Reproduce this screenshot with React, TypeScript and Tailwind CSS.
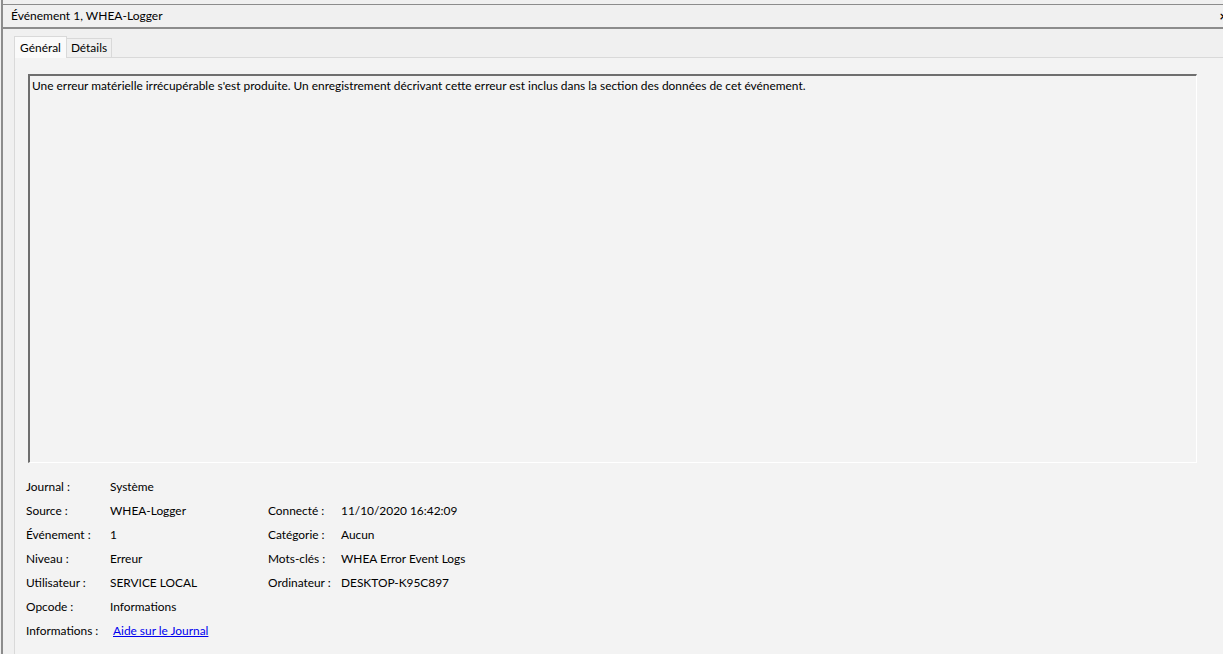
import React from "react";

const rows: [string, React.ReactNode, string, string][] = [
  ["Journal :", "Système", "", ""],
  ["Source :", "WHEA-Logger", "Connecté :", "11/10/2020 16:42:09"],
  ["Événement :", "1", "Catégorie :", "Aucun"],
  ["Niveau :", "Erreur", "Mots-clés :", "WHEA Error Event Logs"],
  ["Utilisateur :", "SERVICE LOCAL", "Ordinateur :", "DESKTOP-K95C897"],
  ["Opcode :", "Informations", "", ""],
  [
    "Informations :",
    <a key="l" href="#" className="ml-[3px] text-[#0000ee] underline">
      Aide sur le Journal
    </a>,
    "",
    "",
  ],
];

export default function App() {
  return (
    <div className="w-[1223px] h-[654px] overflow-hidden bg-[#f0f0f0] text-[11.9px] leading-none text-black font-['Lato',sans-serif] flex">
      <div className="ml-[1px] w-[2px] bg-[#8c8c8c] shrink-0" />
      <div className="flex-1 flex flex-col min-w-0">
        <div className="h-[4px]" />
        <div className="h-[25px] border-t border-b-2 border-[#8c8c8c] flex items-center justify-between pl-[8px]">
          <span className="text-[12px]">Événement 1, WHEA-Logger</span>
          <span className="text-[13px] font-bold mr-[-4px]">×</span>
        </div>
        <div className="pl-[11px] pt-[6px] flex flex-col flex-1">
          <div className="flex items-end h-[22px]">
            <div className="h-[22px] w-[53px] bg-[#fafafa] border border-b-0 border-[#d9d9d9] flex items-center justify-center relative top-[1px]">
              Général
            </div>
            <div className="h-[19px] w-[45px] border border-l-0 border-b-0 border-[#d9d9d9] flex items-center justify-center">
              Détails
            </div>
          </div>
          <div className="flex-1 border-t border-l border-[#d9d9d9] bg-[#f3f3f3] pt-[16px] pl-[13px]">
            <div className="w-[1169px] h-[389px] border-t-2 border-l-2 border-[#6e6e6e] border-r border-b border-r-white border-b-white pt-[4px] pl-[2px]">
              Une erreur matérielle irrécupérable s'est produite. Un enregistrement décrivant cette erreur est inclus dans la section des données de cet événement.
            </div>
            <div className="grid grid-cols-[84px_158px_73px_auto] auto-rows-[24px] items-center mt-[12px] ml-[-2px]">
              {rows.map((r, i) => (
                <React.Fragment key={i}>
                  <div>{r[0]}</div>
                  <div>{r[1]}</div>
                  <div>{r[2]}</div>
                  <div>{r[3]}</div>
                </React.Fragment>
              ))}
            </div>
          </div>
        </div>
      </div>
    </div>
  );
}
